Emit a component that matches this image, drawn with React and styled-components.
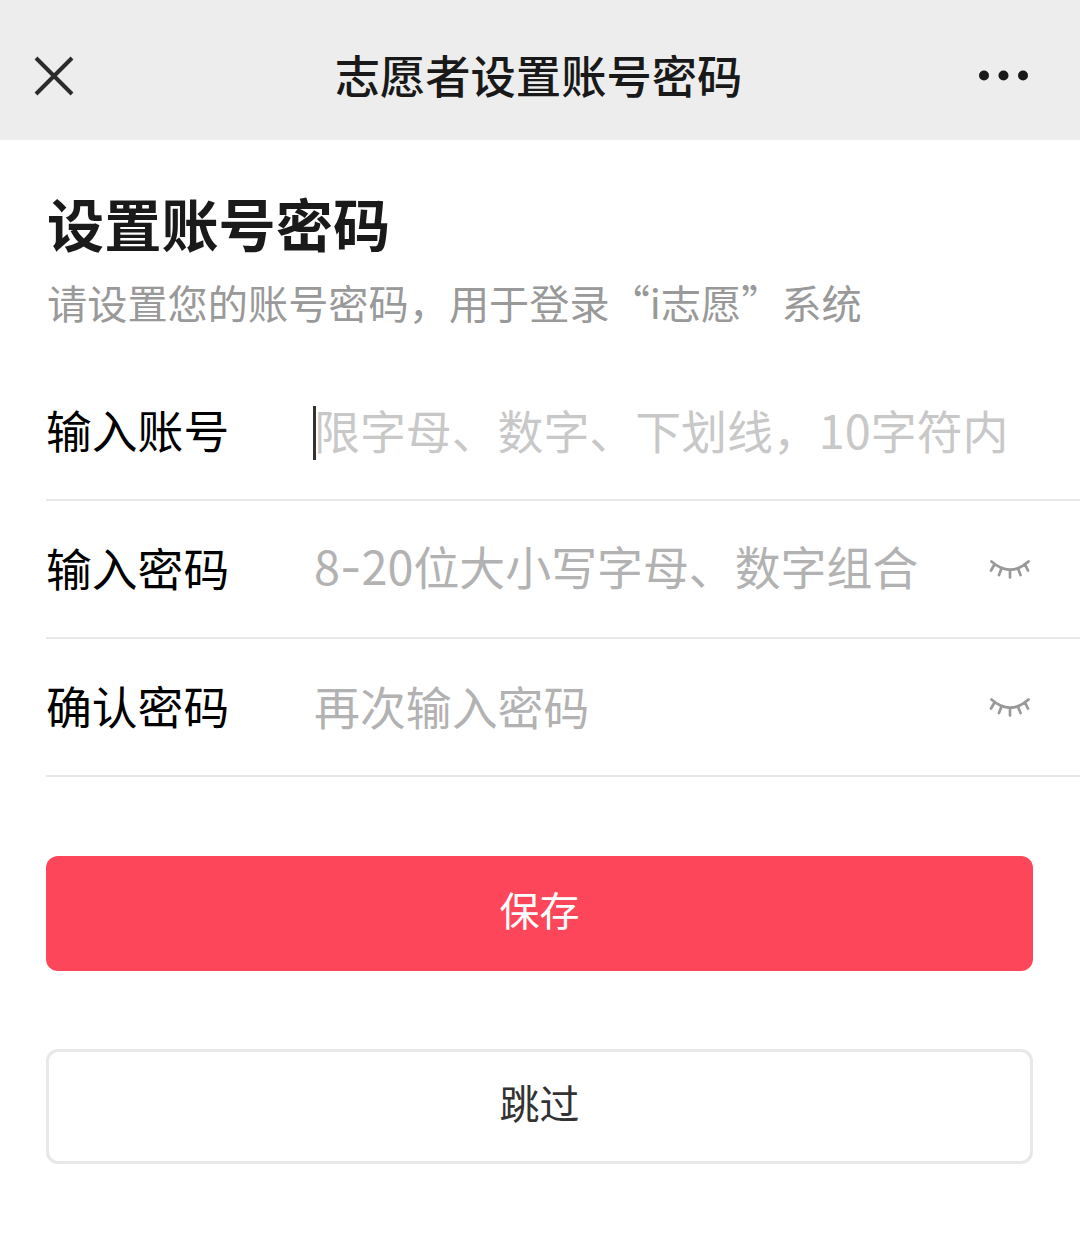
import React from 'react';
import styled, { createGlobalStyle } from 'styled-components';

/********** Styling **********/
const GlobalStyle = createGlobalStyle`
  * {
    box-sizing: border-box;
  }
  body {
    margin: 0;
    background-color: #fff;
    font-family: "Noto Sans CJK SC", sans-serif;
  }
`
const Page = styled.div`
  width: 1080px;
  height: 1254px;
  overflow: hidden;
`
const Navbar = styled.header`
  height: 140px;
  padding: 12px 50px 0 34px;
  display: flex;
  align-items: center;
  justify-content: space-between;
  background-color: #ededed;
`
const NavTitle = styled.h1`
  margin: 0 0 4px 25px;
  font-size: 45.3px;
  font-weight: 500;
  line-height: 60px;
  color: #191919;
`
const Content = styled.main`
  padding: 46px 0 0 46px;
`
const Heading = styled.h2`
  margin: 0 0 0 1px;
  font-size: 57.2px;
  font-weight: 700;
  line-height: 72px;
  color: #1a1a1a;
`
const Hint = styled.p`
  margin: 19px 0 0 1px;
  font-size: 40.2px;
  line-height: 50px;
  color: #999;
  white-space: nowrap;
`
const Form = styled.form`
  margin-top: 36px;
`
const Row = styled.label`
  height: 138px;
  padding-right: 49px;
  display: flex;
  align-items: center;
  border-bottom: 2px solid #e8e8e8;
`
const Label = styled.span`
  width: 268px;
  padding-bottom: 5px;
  font-size: 45.8px;
  color: #000;
`
const Caret = styled.i`
  width: 3px;
  height: 54px;
  margin: 4px -2px 0 -1px;
  background-color: #333;
`
const Placeholder = styled.span`
  flex: 1;
  padding-bottom: 5px;
  font-size: 45.9px;
  line-height: 66px;
  color: ${({$light}) => $light ? '#c8c8c8' : '#b2b2b2'};
  white-space: nowrap;
`
const Digits = styled.span`
  font-size: 46.8px;
`
const Dash = styled.span`
  font-family: Inter, sans-serif;
  font-weight: 400;
`
const Buttons = styled.div`
  margin: 79px 47px 0 0;
  display: grid;
  gap: 78px;
`
const Button = styled.button`
  height: 115px;
  padding: 0 0 9px;
  border: ${({$primary}) => $primary ? 'none' : '3px solid #e8e8e8'};
  border-radius: 12px;
  background-color: ${({$primary}) => $primary ? '#fe465b' : '#fff'};
  color: ${({$primary}) => $primary ? '#fff' : '#333'};
  font-family: inherit;
  font-size: 40px;
`

/********** Icons **********/
const CloseIcon = () => (
  <svg width="40" height="40" viewBox="0 0 40 40" fill="none" stroke="#2b2b2b" strokeWidth="4">
    <path d="M2 2 38 38M38 2 2 38" />
  </svg>
)
const MoreIcon = () => (
  <svg width="52" height="12" viewBox="0 0 52 12" fill="#191919">
    <circle cx="6" cy="5.5" r="5" />
    <circle cx="25.5" cy="5.5" r="5" />
    <circle cx="45" cy="5.5" r="5" />
  </svg>
)
const ClosedEyeIcon = () => (
  <svg width="42" height="24" viewBox="0 0 42 24" fill="none" stroke="#999" strokeWidth="2.7" strokeLinecap="round">
    <path d="M2.5 4.5Q21 21 39.5 4.5M5.5 7.5 2 13.5M12.5 11.5 10 18M21 13V20.5M29 11.5 31.5 18M36 7.5 39 13.5" />
  </svg>
)

/********** App Component **********/
const App = () => {
  return (
    <>
      <GlobalStyle />
      <Page>
        <Navbar>
          <CloseIcon />
          <NavTitle>志愿者设置账号密码</NavTitle>
          <MoreIcon />
        </Navbar>
        <Content>
          <Heading>设置账号密码</Heading>
          <Hint>请设置您的账号密码，用于登录“i志愿”系统</Hint>
          <Form>
            <Row>
              <Label>输入账号</Label>
              <Caret />
              <Placeholder $light>限字母、数字、下划线，<Digits>10</Digits>字符内</Placeholder>
            </Row>
            <Row>
              <Label>输入密码</Label>
              <Placeholder><Digits>8<Dash>-</Dash>20</Digits>位大小写字母、数字组合</Placeholder>
              <ClosedEyeIcon />
            </Row>
            <Row>
              <Label>确认密码</Label>
              <Placeholder>再次输入密码</Placeholder>
              <ClosedEyeIcon />
            </Row>
          </Form>
          <Buttons>
            <Button type="button" $primary>保存</Button>
            <Button type="button">跳过</Button>
          </Buttons>
        </Content>
      </Page>
    </>
  )
}

export default App
